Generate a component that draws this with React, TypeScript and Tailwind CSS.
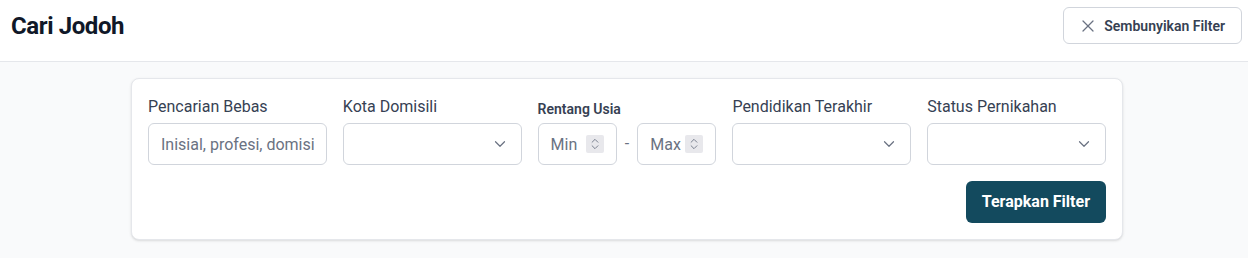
import { X, ChevronDown, ChevronsUpDown } from "lucide-react";

const font = { fontFamily: "Roboto, 'Noto Sans', sans-serif" };

function Select() {
  return (
    <div className="relative">
      <select className="h-[42px] w-full appearance-none rounded-md border border-gray-300 bg-white px-3 text-base text-gray-900 outline-none">
        <option value=""></option>
      </select>
      <ChevronDown
        className="pointer-events-none absolute right-[13px] top-1/2 h-[18px] w-[18px] -translate-y-1/2 text-gray-500"
        strokeWidth={1.6}
      />
    </div>
  );
}

function NumberInput({ placeholder }: { placeholder: string }) {
  return (
    <div className="relative min-w-0 flex-1">
      <input
        type="text"
        inputMode="numeric"
        placeholder={placeholder}
        className="h-[42px] w-full rounded-md border border-gray-300 bg-white pl-3 pr-8 text-base text-gray-900 outline-none placeholder:text-gray-500"
      />
      <span className="pointer-events-none absolute right-[13px] top-1/2 flex h-[18px] w-[18px] -translate-y-1/2 items-center justify-center rounded-[2px] bg-[#e8e8ec]">
        <ChevronsUpDown className="h-[14px] w-[14px] text-gray-500" strokeWidth={1.5} />
      </span>
    </div>
  );
}

export default function App() {
  return (
    <div className="min-h-screen bg-gray-50" style={font}>
      <header className="flex items-center justify-between border-b border-gray-200 bg-white pb-[17px] pl-[11px] pr-[6px] pt-[7px]">
        <h1 className="text-2xl font-bold tracking-[-0.4px] text-gray-900">Cari Jodoh</h1>
        <button className="flex h-[37px] items-center gap-[6px] rounded-md border border-gray-300 bg-white pl-[14px] pr-4 text-sm font-semibold text-gray-700">
          <X className="h-5 w-5 text-gray-500" strokeWidth={1.5} />
          Sembunyikan Filter
        </button>
      </header>

      <div className="pl-[131px] pr-[125px] pt-4">
        <div className="rounded-lg border border-gray-200 bg-white p-4 shadow-sm">
          <div className="grid grid-cols-5 gap-4">
            <div className="flex flex-col">
              <label className="mb-1 text-base leading-6 text-gray-700">Pencarian Bebas</label>
              <input
                type="text"
                placeholder="Inisial, profesi, domisili..."
                className="h-[42px] w-full rounded-md border border-gray-300 bg-white px-3 text-base text-gray-900 outline-none placeholder:text-gray-500"
              />
            </div>
            <div className="flex flex-col">
              <label className="mb-1 text-base leading-6 text-gray-700">Kota Domisili</label>
              <Select />
            </div>
            <div className="flex flex-col">
              <label className="mb-1 flex h-6 items-end text-sm font-semibold leading-5 text-gray-700">Rentang Usia</label>
              <div className="flex items-center gap-2">
                <NumberInput placeholder="Min" />
                <span className="text-gray-500">-</span>
                <NumberInput placeholder="Max" />
              </div>
            </div>
            <div className="flex flex-col">
              <label className="mb-1 text-base leading-6 text-gray-700">Pendidikan Terakhir</label>
              <Select />
            </div>
            <div className="flex flex-col">
              <label className="mb-1 text-base leading-6 text-gray-700">Status Pernikahan</label>
              <Select />
            </div>
          </div>
          <div className="mt-4 flex justify-end">
            <button className="h-[42px] rounded-md bg-[#134a5e] px-4 text-base font-bold text-white">
              Terapkan Filter
            </button>
          </div>
        </div>
      </div>
    </div>
  );
}
